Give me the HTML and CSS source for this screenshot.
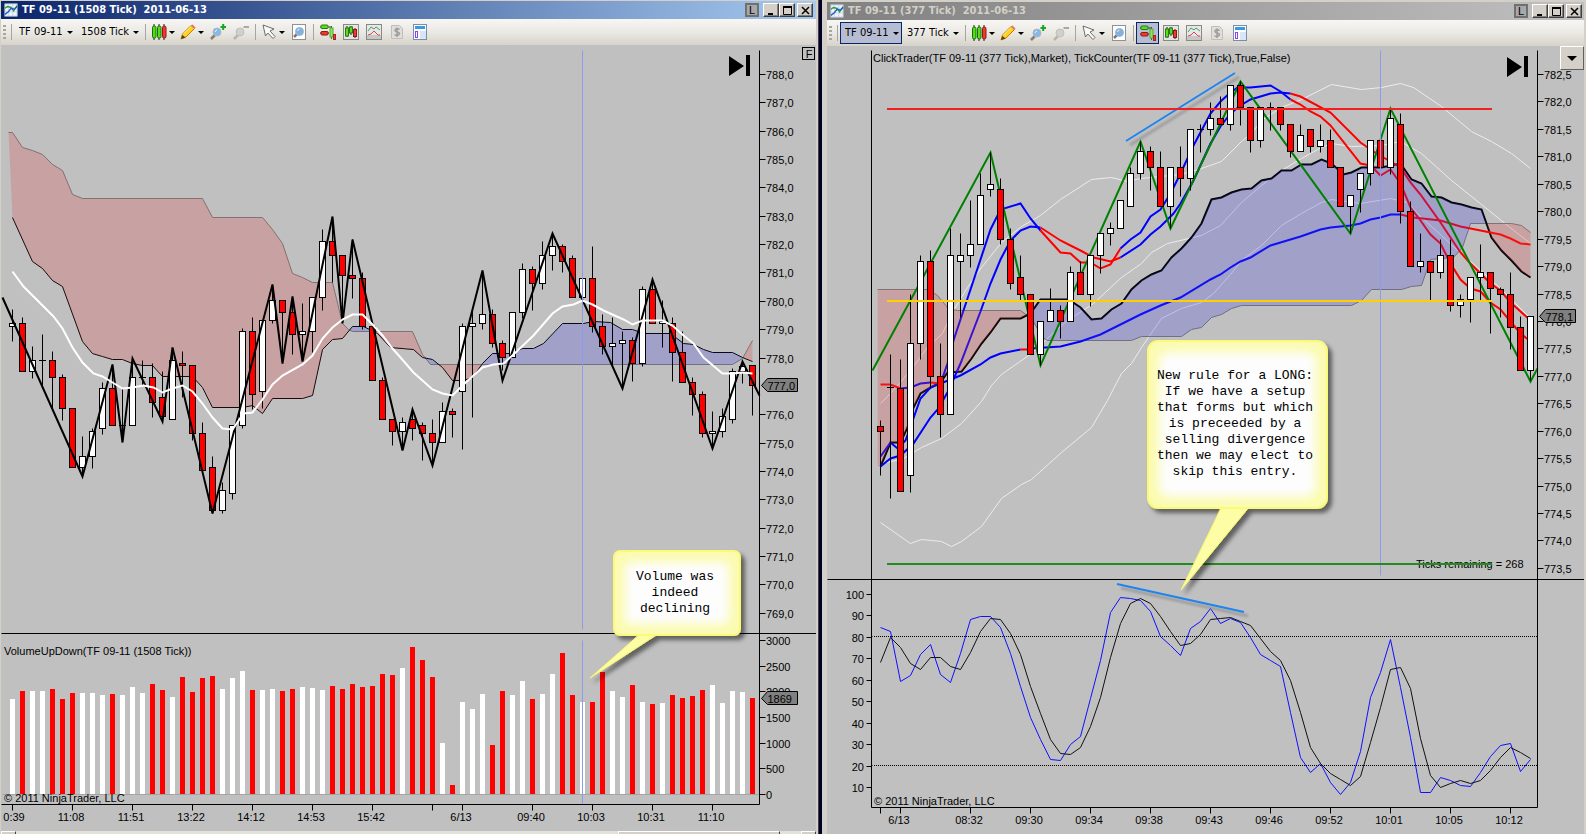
FILE: index.html
```html
<!DOCTYPE html>
<html lang="en">
<head>
<meta charset="utf-8">
<title>TF 09-11 Charts</title>
<link rel="stylesheet" href="styles.css">
</head>
<body>
<svg class="sprites" aria-hidden="true">
  <symbol id="i-app" viewBox="0 0 16 16"><rect x="1" y="1" width="14" height="14" fill="#eef4fb" stroke="#b8c8dc"/><path d="M5 1v14M10 1v14M1 5h14M1 10h14" stroke="#c4d4e8"/><path d="M1 6l3 -2 4 1 3 4 4-6" fill="none" stroke="#2a9a2a" stroke-width="1.500"/><path d="M1 13l4-3 3-4 4 1 3-3" fill="none" stroke="#2458c8" stroke-width="1.500"/></symbol>
  <symbol id="i-candles" viewBox="0 0 16 16"><path d="M3 0v16M8 0v16M13 0v16" stroke="#222"/><rect x="1.500" y="2" width="3.500" height="12" rx="1.500" fill="#4fe010" stroke="#1c6a10"/><rect x="6.500" y="2" width="3.500" height="12" rx="1.500" fill="#4fe010" stroke="#1c6a10"/><rect x="11.500" y="2" width="3.500" height="12" rx="1.500" fill="#f03a30" stroke="#8a1a14"/></symbol>
  <symbol id="i-pencil" viewBox="0 0 16 16"><path d="M1 15l1.500-5L11 1.500l3.500 3L6 13z" fill="#ffd21e" stroke="#c07a10"/><path d="M3 10.500l8-8" stroke="#fff08a"/><path d="M1 15l1.500-4 3 2.500z" fill="#5a3a1a"/><path d="M11 1.500l1.500-1 3 3-1 1.200z" fill="#e87070"/></symbol>
  <symbol id="i-zoomin" viewBox="0 0 16 16"><path d="M1 15l4-4" stroke="#8a7a70" stroke-width="2.500"/><circle cx="7" cy="8" r="4" fill="#86b9e6" stroke="#a9b8c8"/><path d="M5 8a2.500 2.500 0 012-2" stroke="#e8f4ff" fill="none"/><path d="M10.500 3h5.500M13.200 0v6" stroke="#14a81e" stroke-width="2"/></symbol>
  <symbol id="i-zoomout" viewBox="0 0 16 16"><path d="M1 15l4-4" stroke="#b8b5b0" stroke-width="2.500"/><circle cx="7" cy="8" r="4" fill="#d0d0d0" stroke="#c2c0bc"/><path d="M10.500 3h5.500" stroke="#a8a8a8" stroke-width="2"/></symbol>
  <symbol id="i-cursor" viewBox="0 0 16 16"><path d="M2 1l11 4-4 2 5 5.500-2 2L6.800 9 4.500 12z" fill="#fafafa" stroke="#6c6c6c"/></symbol>
  <symbol id="i-find" viewBox="0 0 16 16"><rect x="1.500" y=".5" width="13" height="15" fill="#fff" stroke="#8e9298"/><path d="M3 13l3-3" stroke="#84746c" stroke-width="2.500"/><circle cx="8.500" cy="7.500" r="4" fill="#7fb2e2" stroke="#a0b4c8"/><path d="M6.500 7a2.500 2.500 0 012-2" stroke="#e8f4ff" fill="none"/></symbol>
  <symbol id="i-trader" viewBox="0 0 16 16"><path d="M0 3h11M0 9h9" stroke="#333"/><rect x="1" y="1" width="7" height="3.500" rx="1" fill="#58e020" stroke="#2a7a14"/><rect x="1" y="7.500" width="7" height="3.500" rx="1" fill="#f03a30" stroke="#8a1a14"/><path d="M11.500 2v13" stroke="#2a7a14"/><rect x="10" y="4" width="3" height="9" fill="#8ae858" stroke="#5aa838"/><rect x="13.500" y="10.500" width="2" height="5" fill="#f03a30" stroke="#a02820"/></symbol>
  <symbol id="i-bars" viewBox="0 0 16 16"><rect x=".5" y=".5" width="15" height="15" fill="#e4e4e2" stroke="#888"/><path d="M4 2v11M8 2v9M12 4v10" stroke="#222"/><rect x="2.500" y="4" width="3" height="8" fill="#58e020" stroke="#2a7a14"/><rect x="6.500" y="3" width="3" height="6" fill="#58e020" stroke="#2a7a14"/><rect x="10.500" y="5.500" width="3" height="7" fill="#f03a30" stroke="#8a1a14"/></symbol>
  <symbol id="i-lines" viewBox="0 0 16 16"><rect x=".5" y=".5" width="15" height="15" fill="#e6e8e8" stroke="#888"/><path d="M1 11h14v4H1z" fill="#c6c8c8"/><path d="M2 7l3-4 3 2 2-2 4 3" fill="none" stroke="#46a070"/><path d="M2 11l3-1 3-3 4 4h2" fill="none" stroke="#e04848"/></symbol>
  <symbol id="i-dollar" viewBox="0 0 16 16"><path d="M2.500 1.500h8l3 3v10h-11z" fill="#e0dedb" stroke="#c0bebb"/><path d="M10.500 5.500C9.500 4.500 6 4.400 6 6.400s4.500 1.200 4.500 3.200S6.500 12 5.500 10.600M8 3.500v9.500" fill="none" stroke="#9c9c9c" stroke-width="1.500"/></symbol>
  <symbol id="i-layout" viewBox="0 0 16 16"><rect x="1.500" y=".5" width="13" height="15" fill="#fbfcff" stroke="#7a8ea8"/><path d="M3 3.500h10" stroke="#3a9ade" stroke-width="3"/><rect x="3.500" y="7.500" width="2" height="6" fill="#fff" stroke="#9040f0"/><path d="M8 7h6v8H8z" fill="#d8e4f8"/></symbol>
</svg>
<main class="desk">
  <section class="win win-left" aria-label="1508 Tick chart">
    <header class="title title-active">
      <svg class="ico"><use href="#i-app"/></svg>
      <h1 class="caption">TF 09-11 (1508 Tick)&nbsp; 2011-06-13</h1>
      <button class="sys sys-link" aria-label="Link">L</button>
      <div class="sysgroup">
        <button class="sys" aria-label="Minimize"><svg viewBox="0 0 9 9"><path d="M1 8h5" stroke="#000" stroke-width="2"/></svg></button>
        <button class="sys" aria-label="Maximize"><svg viewBox="0 0 9 9"><path d="M.5 1v7.500h8V1" fill="none" stroke="#000"/><path d="M0 1h9" stroke="#000" stroke-width="2"/></svg></button>
      </div>
      <button class="sys" aria-label="Close"><svg viewBox="0 0 9 9"><path d="M1 1l7 7M8 1L1 8" stroke="#000" stroke-width="1.500"/></svg></button>
    </header>
    <div class="bar" role="toolbar" aria-label="Chart tools">
      <i class="grip"></i><i class="sep"></i>
      <label class="combo"><select aria-label="Instrument"><option>TF 09-11</option></select></label>
      <label class="combo"><select aria-label="Interval"><option>1508 Tick</option></select></label>
      <i class="sep"></i>
      <button class="tool drop" aria-label="Chart style"><svg class="ico"><use href="#i-candles"/></svg></button>
      <button class="tool drop" aria-label="Drawing tools"><svg class="ico"><use href="#i-pencil"/></svg></button>
      <button class="tool" aria-label="Zoom in"><svg class="ico"><use href="#i-zoomin"/></svg></button>
      <button class="tool" aria-label="Zoom out"><svg class="ico"><use href="#i-zoomout"/></svg></button>
      <i class="sep"></i>
      <button class="tool drop" aria-label="Cursor"><svg class="ico"><use href="#i-cursor"/></svg></button>
      <button class="tool" aria-label="Data box"><svg class="ico"><use href="#i-find"/></svg></button>
      <i class="sep"></i>
      <button class="tool" aria-label="Chart trader"><svg class="ico"><use href="#i-trader"/></svg></button>
      <button class="tool" aria-label="Data series"><svg class="ico"><use href="#i-bars"/></svg></button>
      <button class="tool" aria-label="Indicators"><svg class="ico"><use href="#i-lines"/></svg></button>
      <button class="tool" aria-label="Strategies"><svg class="ico"><use href="#i-dollar"/></svg></button>
      <button class="tool" aria-label="Properties"><svg class="ico"><use href="#i-layout"/></svg></button>
    </div>
    <svg id="chart-1508" class="chart" viewBox="1 45 815 786" role="img" aria-label="TF 09-11 1508 Tick price and volume"></svg>
    <div class="scroll"><i class="scroll-btn"></i><i class="scroll-gap"></i><i class="scroll-thumb"></i><i class="scroll-rest"></i><i class="scroll-btn"></i></div>
  </section>
  <div class="divider"></div>
  <section class="win win-right" aria-label="377 Tick chart">
    <header class="title title-idle">
      <svg class="ico"><use href="#i-app"/></svg>
      <h2 class="caption">TF 09-11 (377 Tick)&nbsp; 2011-06-13</h2>
      <button class="sys sys-link" aria-label="Link">L</button>
      <div class="sysgroup">
        <button class="sys" aria-label="Minimize"><svg viewBox="0 0 9 9"><path d="M1 8h5" stroke="#000" stroke-width="2"/></svg></button>
        <button class="sys" aria-label="Maximize"><svg viewBox="0 0 9 9"><path d="M.5 1v7.500h8V1" fill="none" stroke="#000"/><path d="M0 1h9" stroke="#000" stroke-width="2"/></svg></button>
      </div>
      <button class="sys" aria-label="Close"><svg viewBox="0 0 9 9"><path d="M1 1l7 7M8 1L1 8" stroke="#000" stroke-width="1.500"/></svg></button>
    </header>
    <div class="bar" role="toolbar" aria-label="Chart tools">
      <i class="grip"></i><i class="sep"></i>
      <label class="combo combo-on"><select aria-label="Instrument"><option>TF 09-11</option></select></label>
      <label class="combo"><select aria-label="Interval"><option>377 Tick</option></select></label>
      <i class="sep"></i>
      <button class="tool drop" aria-label="Chart style"><svg class="ico"><use href="#i-candles"/></svg></button>
      <button class="tool drop" aria-label="Drawing tools"><svg class="ico"><use href="#i-pencil"/></svg></button>
      <button class="tool" aria-label="Zoom in"><svg class="ico"><use href="#i-zoomin"/></svg></button>
      <button class="tool" aria-label="Zoom out"><svg class="ico"><use href="#i-zoomout"/></svg></button>
      <i class="sep"></i>
      <button class="tool drop" aria-label="Cursor"><svg class="ico"><use href="#i-cursor"/></svg></button>
      <button class="tool" aria-label="Data box"><svg class="ico"><use href="#i-find"/></svg></button>
      <i class="sep"></i>
      <button class="tool tool-on" aria-label="Chart trader"><svg class="ico"><use href="#i-trader"/></svg></button>
      <button class="tool" aria-label="Data series"><svg class="ico"><use href="#i-bars"/></svg></button>
      <button class="tool" aria-label="Indicators"><svg class="ico"><use href="#i-lines"/></svg></button>
      <button class="tool" aria-label="Strategies"><svg class="ico"><use href="#i-dollar"/></svg></button>
      <button class="tool" aria-label="Properties"><svg class="ico"><use href="#i-layout"/></svg></button>
    </div>
    <div class="plot">
      <svg id="chart-377" class="chart" viewBox="827 46 757 788" role="img" aria-label="TF 09-11 377 Tick price and stochastics"></svg>
      <button class="menu-btn" aria-label="Chart menu"></button>
    </div>
  </section>
</main>
<script src="charts.js"></script>
</body>
</html>
```

FILE: styles.css
```css
* { box-sizing: border-box; }
body { margin: 0; background: #c0c0c0; font: 11px/14px "DejaVu Sans Condensed", "Noto Sans", sans-serif; color: #000; }
button, select { font: inherit; color: inherit; margin: 0; padding: 0; border: 0; background: none; border-radius: 0; }
.sprites { display: none; }
.desk { display: grid; grid-template-columns: 818fr 4px 764fr; }
.win { display: flex; flex-direction: column; background: #c0c0c0; min-width: 0; }
.win-left { border: solid #d4d0c8; border-width: 1px 2px 0 1px; }
.win-right { border: solid #d4d0c8; border-width: 2px 2px 0 5px; }
.divider { background: #00002a; border-left: 1px solid #404040; }

.title { display: flex; align-items: center; height: 18px; padding: 0 3px; }
.title-active { background: linear-gradient(90deg, #0a246a, #a6caf0); color: #fff; }
.title-idle { background: linear-gradient(90deg, #808080, #c0c0c0); color: #d4d0c8; padding-right: 2px; }
.ico { width: 16px; height: 16px; display: block; flex: none; }
.title .ico { width: 14px; height: 14px; }
.caption { margin: 0 auto 0 4px; font-size: 11px; font-weight: bold; white-space: nowrap; }
.sysgroup { display: flex; margin: 0 2px 0 4px; }
.sys { width: 16px; height: 14px; background: #d4d0c8; color: #000; border: 1px solid; border-color: #fff #404040 #404040 #fff; box-shadow: inset -1px -1px #808080; display: flex; align-items: center; justify-content: center; }
.sys svg { width: 9px; height: 9px; display: block; }
.sys-link { width: 14px; background: #a8a8a8; border: 2px solid #707070; box-shadow: none; font: 11px/11px "Liberation Sans", sans-serif; }

.bar { display: flex; align-items: center; height: 26px; padding-left: 2px; background: linear-gradient(#f7f6f3, #ebe9e4 50%, #d6d3ca); }
.grip { width: 3px; height: 15px; margin-right: 2px; background: repeating-linear-gradient(#a8a59c 0 2px, transparent 2px 4px); }
.sep { width: 1px; height: 16px; margin: 0 2px 0 3px; background: #a8a59c; }
.combo { display: grid; align-items: center; height: 22px; border: 1px solid transparent; }
.combo select { grid-area: 1 / 1; appearance: none; padding: 0 12px 0 4px; height: 20px; outline: 0; }
.combo::after, .drop::after { content: ""; border: solid transparent; border-width: 3px 3px 0; border-top-color: #000; pointer-events: none; }
.combo::after { grid-area: 1 / 1; justify-self: end; margin-right: 2px; }
.combo-on, .tool-on { background: #b6bdd2; border-color: #0a246a; }
.tool { display: flex; align-items: center; justify-content: center; width: 23px; height: 22px; }
.tool-on { border: 1px solid #0a246a; }
.drop { width: 29px; gap: 2px; }

.plot { position: relative; }
.chart { display: block; width: 100%; height: auto; font: 11px "Liberation Sans", Arial, sans-serif; }
.menu-btn { position: absolute; top: 0; right: 0; width: 24px; height: 24px; display: grid; place-items: center; background: #d4d0c8; border: 1px solid; border-color: #fff #606060 #606060 #fff; }
.menu-btn::after { content: ""; border: solid transparent; border-width: 5px 5px 0; border-top-color: #000; }
.note { font: 13px "Liberation Mono", "Courier New", monospace; }

.scroll { display: flex; height: 3px; background: #e4e1db; }
.scroll i { height: 3px; }
.scroll-btn { flex: 0 0 15px; background: #d4d0c8; border: 1px solid; border-color: #fff #404040 #fff #fff; border-bottom: 0; }
.scroll-gap { flex: 604 1 0; }
.scroll-thumb { flex: 160 1 0; background: #d4d0c8; border: solid; border-width: 1px 1px 0; border-color: #fff #404040 #fff #fff; }
.scroll-rest { flex: 21 1 0; }
```

FILE: charts.js
```js
const NS = 'http://www.w3.org/2000/svg';

function el(parent, name, attrs, text) {
  const e = document.createElementNS(NS, name);
  for (const k in attrs) e.setAttribute(k, attrs[k]);
  if (text !== undefined) e.textContent = text;
  parent.appendChild(e);
  return e;
}
const parse = s => s.trim().split(/\s+/).map(p => p.split(',').map(Number));
const line = (g, pts, stroke, width = 1, extra = {}) =>
  el(g, 'polyline', { points: pts, fill: 'none', stroke, 'stroke-width': width, ...extra });
const rule = (g, x1, y1, x2, y2, stroke = '#000', width = 1, extra = {}) =>
  el(g, 'line', { x1, y1, x2, y2, stroke, 'stroke-width': width, ...extra });
const label = (g, x, y, text, anchor = 'start') =>
  el(g, 'text', { x, y, 'text-anchor': anchor }, text);

function yAt(pts, x) {
  if (x <= pts[0][0]) return pts[0][1];
  for (let i = 1; i < pts.length; i++) {
    if (x <= pts[i][0]) {
      const [x0, y0] = pts[i - 1], [x1, y1] = pts[i];
      return y0 + (y1 - y0) * (x - x0) / (x1 - x0 || 1);
    }
  }
  return pts[pts.length - 1][1];
}

// Fills the area between two spans: blue where the first is on top, red otherwise.
function cloud(g, a, b, from, to) {
  let run = [], side = null;
  const flush = () => {
    if (run.length > 1) {
      const top = run.map(r => r[0] + ',' + r[1]);
      const bottom = run.slice().reverse().map(r => r[0] + ',' + r[2]);
      el(g, 'polygon', { points: top.concat(bottom).join(' '), 'fill-opacity': 0.25, fill: side ? 'rgb(64,64,224)' : 'rgb(224,72,72)' });
    }
  };
  for (let x = from; x <= to; x++) {
    const ya = yAt(a, x), yb = yAt(b, x), s = ya < yb;
    if (side !== null && s !== side) { run.push([x, ya, yb]); flush(); run = []; }
    side = s;
    run.push([x, ya, yb]);
  }
  flush();
}

function candles(g, data, x0) {
  data.trim().split(/\s+/).forEach((d, i) => {
    const kind = d[0], [h, t, b, l] = d.slice(1).split(',').map(Number), x = x0 + i * 10;
    rule(g, x, h, x, l);
    if (kind === 'd') rule(g, x - 3.5, t, x + 3.5, t);
    else el(g, 'rect', { x: x - 3, y: t, width: 6, height: b - t, fill: kind === 'r' ? '#f00' : '#fff', stroke: '#000' });
  });
}

function tag(g, x, y, text) {
  el(g, 'path', { d: `M${x} ${y}l6 -7h30v13h-30z`, fill: '#808080', stroke: '#000' });
  label(g, x + 6, y + 4, text);
}

function defs(svg, id) {
  const d = el(svg, 'defs', {});
  const f = el(d, 'filter', { id: id + '-shadow', x: '-20%', y: '-20%', width: '150%', height: '160%' });
  el(f, 'feDropShadow', { dx: 4, dy: 4, stdDeviation: 2, 'flood-color': '#000', 'flood-opacity': 0.5 });
  const s = el(d, 'filter', { id: id + '-blur', x: '-20%', y: '-20%', width: '140%', height: '140%' });
  el(s, 'feGaussianBlur', { stdDeviation: 5 });
  const t = el(d, 'filter', { id: id + '-soft', x: '-10%', y: '-30%', width: '120%', height: '160%' });
  el(t, 'feGaussianBlur', { stdDeviation: 1 });
}

function callout(svg, id, box, tail, lines, cx, baseline) {
  const g = el(svg, 'g', { filter: `url(#${id}-shadow)` });
  const [x, y, w, h, r] = box;
  el(g, 'path', { d: tail, fill: '#fdfda6', stroke: '#f7f76c', 'stroke-linejoin': 'round' });
  el(g, 'rect', { x, y, width: w, height: h, rx: r, fill: '#fbfbb0', stroke: '#fafa7a', 'stroke-width': 2 });
  el(svg, 'rect', { x: x + 11, y: y + 11, width: w - 22, height: h - 22, rx: r, fill: '#fdfdfd', filter: `url(#${id}-blur)` });
  lines.forEach((t, i) => el(svg, 'text', { class: 'note', x: cx, y: baseline + i * 16, 'text-anchor': 'middle' }, t));
}

function playIcon(g, x, y) {
  el(g, 'path', { d: `M${x} ${y}l15 10-15 10zM${x + 17} ${y - 1}h4v21h-4z`, fill: '#000' });
}

function trend(svg, id, x1, y1, x2, y2) {
  rule(svg, x1 + 4, y1 + 4, x2 + 4, y2 + 4, '#888', 3, { opacity: 0.6, filter: `url(#${id}-soft)` });
  rule(svg, x1, y1, x2, y2, '#1e84f0', 2);
}

(function tick1508() {
  const svg = document.getElementById('chart-1508');
  defs(svg, 'a');
  const g = el(svg, 'g', { transform: 'translate(.5 .5)' });
  const spanA = '12,217 32,261 42,268 52,280 62,286 82,341 92,353 102,356 112,359 122,359 132,363 142,365 152,365 162,376 192,376 202,387 212,407 242,407 252,405 262,413 272,398 302,398 312,395 322,349 332,339 342,338 352,326 363,326 377,333 390,347 413,349 422,357 432,359 442,367 452,380 463,380 472,377 482,363 492,353 510,353 522,348 533,348 543,343 562,323 583,323 593,321 610,322 622,329 632,329 643,333 670,333 683,343 693,344 703,349 712,352 732,352 742,357 752,361';
  const spanB = '8,132 12,132 22,147 32,150 42,154 52,164 62,170 72,194 82,198 202,198 212,217 262,217 272,229 282,243 292,273 302,277 312,282 332,282 342,323 348,329 352,331 412,331 422,354 430,364 732,364 742,358 752,340';
  line(g, spanB, '#777');
  line(g, spanA, '#000');
  cloud(g, parse('8,132 ' + spanA), parse(spanB), 8, 752);

  candles(g, `w309,323,326,341 r317,323,371,371 w346,360,371,378 d334,360,360,388 r351,360,377,410 r374,377,408,420 r408,408,467,467
    w436,456,467,475 w428,431,456,468 w382,388,428,434 r365,388,425,425 d388,425,425,440 w358,377,425,425 d360,377,377,385
    r363,377,402,417 r371,397,416,420 w348,360,419,419 r351,363,365,397 r365,365,433,440 r422,433,470,470 r456,467,510,513
    w482,490,510,513 w425,425,493,499 w328,331,425,428 r317,331,394,409 w320,320,391,408 w285,300,320,323 r300,300,312,362
    r297,312,334,354 w303,331,334,360 w297,297,331,352 w229,241,297,310 r217,241,255,282 r255,255,275,322 r239,275,278,298
    r272,278,326,329 r326,326,380,380 r377,380,419,419 r419,419,431,445 w417,422,431,449 r409,419,428,440 r422,425,433,460
    r419,433,442,465 w402,411,442,442 r408,411,414,437 w323,326,391,449 w310,323,326,417 w270,314,323,329 r309,314,343,347
    r340,343,357,370 w312,312,357,357 w263,269,312,318 r266,269,283,310 w241,255,283,289 w233,246,255,270 r244,246,261,272
    r255,258,297,297 w258,278,297,312 r246,278,326,332 r314,326,346,354 w317,343,346,365 w331,340,343,387 r337,340,363,381
    w286,289,363,366 r279,289,323,323 w300,321,323,347 r317,323,352,381 r331,352,382,382 r377,382,394,415 r391,394,433,437
    w411,431,433,448 w408,416,431,437 w368,371,419,423 w362,366,371,383 r365,365,385,415`, 12);

  line(g, '2,297 82,476 112,364 122,442 132,358 162,421 172,347 212,513 272,284 282,363 292,296 302,361 332,216 342,323 352,239 402,450 412,409 432,465 482,270 502,380 552,233 622,388 652,279 712,448 742,361 759,395', '#000', 2);
  line(g, '12,271 23,286 53,316 62,328 72,347 82,362 93,373 102,376 112,382 122,388 132,387 143,385 153,387 162,392 172,388 182,385 192,391 202,403 212,417 222,428 232,429 243,413 252,412 262,399 272,384 282,375 302,364 312,355 322,338 332,327 342,319 352,314 362,314 372,324 382,335 392,348 400,357 413,372 432,389 442,393 452,395 463,384 482,367 493,364 503,363 513,354 533,335 552,313 562,306 573,304 582,300 592,304 603,310 623,319 632,324 642,320 662,320 672,325 683,335 693,343 703,357 722,373 732,373 742,372 752,373', '#fff', 2);

  const tops = 'w699 r691 w691 w691 r689 r699 r693 w693 w693 w695 r694 w695 w687 w693 r684 r690 w697 r677 r692 r678 r676 w689 w678 w671 r690 w690 w689 r691 r689 w687 w688 w690 r686 r689 r684 r687 r686 r674 r675 w668 r647 r660 r677 w743 r785 w702 w709 w694 r745 r691 w695 w681 r699 w694 w674 r653 r695 w702 r702 r672 w691 w697 r685 w702 r704 w703 r695 r698 r696 r690 w685 w703 w691 w692 r698';
  rule(g, 2, 794, 759, 794, '#a4a4a4');
  tops.split(' ').forEach((t, i) => {
    const y = +t.slice(1);
    el(svg, 'rect', { x: 10 + i * 10, y, width: 5, height: 794 - y, fill: t[0] === 'r' ? '#f00' : '#fff' });
  });

  const over = el(svg, 'g', { transform: 'translate(.5 .5)' });
  rule(over, 582, 50, 582, 629, '#8c9cea');
  rule(over, 582, 640, 582, 803, '#8c9cea');
  rule(over, 1, 633, 816, 633);
  line(over, '759,50 759,804 1,804', '#000');
  for (let i = 0; i < 20; i++) {
    const y = Math.round(74 + i * 28.35);
    if (i === 11) continue;
    rule(over, 759, y, 765, y);
    label(svg, 766, y + 5, (788 - i) + ',0');
  }
  for (let i = 0; i < 7; i++) {
    const y = Math.round(794 - i * 25.7);
    rule(over, 759, y, 765, y);
    label(svg, 766, y + 5, String(i * 500));
  }
  tag(svg, 761.5, 385.5, '777,0');
  tag(svg, 761.5, 698.5, '1869');
  [['0:39', 12], ['11:08', 72], ['11:51', 132], ['13:22', 192], ['14:12', 252], ['14:53', 312], ['15:42', 372], ['', 432], ['6/13', 462], ['09:40', 532], ['10:03', 592], ['10:31', 652], ['11:10', 712]].forEach(([t, x]) => {
    rule(over, x, 804, x, 810);
    label(svg, x === 12 ? 14 : x - 1, 821, t, 'middle');
  });
  label(svg, 4, 655, 'VolumeUpDown(TF 09-11 (1508 Tick))');
  label(svg, 4, 802, '© 2011 NinjaTrader, LLC');
  playIcon(svg, 729, 56);
  el(over, 'rect', { x: 802, y: 47, width: 12, height: 12, fill: 'none', stroke: '#000' });
  label(svg, 809, 58, 'F', 'middle');
  callout(svg, 'a', [614, 551, 126, 84, 6], 'M640 634L590 678L658 634z', ['Volume was', 'indeed', 'declining'], 675, 580);
})();

(function tick377() {
  const svg = document.getElementById('chart-377');
  defs(svg, 'b');
  const g = el(svg, 'g', { transform: 'translate(.5 .5)' });
  const spanA = '880,466 890,442 900,442 907,427 913,407 920,393 930,387 940,382 947,372 961,371 971,358 981,343 990,332 1000,318 1020,318 1030,313 1040,299 1068,299 1080,307 1091,319 1101,318 1111,309 1121,303 1131,289 1141,280 1151,274 1161,270 1171,257 1181,248 1191,237 1201,223 1211,199 1221,197 1231,192 1241,189 1251,188 1261,180 1271,178 1281,170 1291,170 1301,164 1311,164 1321,159 1331,163 1343,174 1351,172 1361,167 1381,167 1400,163 1411,179 1421,183 1431,196 1441,197 1451,202 1461,204 1471,207 1481,209 1486,223 1491,237 1501,250 1511,260 1521,271 1530,277';
  const spanB = '877,289 928,289 937,295 948,308 957,310 1020,310 1031,318 1042,337 1047,340 1131,340 1141,336 1181,336 1191,329 1201,327 1211,317 1221,314 1231,308 1241,305 1351,305 1361,300 1371,289 1401,289 1411,286 1421,285 1430,259 1453,257 1462,247 1470,223 1511,223 1521,225 1530,232';
  [
    '880,403 891,392 910,370 927,347 942,333 953,310 967,287 981,267 1001,242 1021,226 1040,215 1060,199 1091,179 1111,177 1127,181 1140,178 1180,174 1201,168 1221,161 1241,141 1251,133 1261,120 1281,107 1301,99 1331,84 1361,89 1381,87 1400,83 1413,87 1441,106 1471,131 1491,141 1511,153 1530,168',
    '880,463 891,461 903,458 921,447 941,438 961,423 981,401 991,385 1001,374 1031,353 1050,335 1067,320 1093,303 1121,277 1141,263 1151,252 1167,243 1201,235 1220,225 1241,202 1261,185 1281,170 1301,158 1321,147 1331,143 1351,146 1381,145 1400,141 1421,153 1451,180 1481,204 1507,225 1530,243',
    '880,522 910,543 921,539 941,541 951,546 961,541 981,526 1001,498 1021,484 1031,479 1061,452 1091,427 1107,400 1121,373 1131,363 1141,347 1161,318 1181,308 1201,302 1213,293 1230,274 1241,260 1261,245 1281,225 1301,213 1321,202 1331,199 1360,203 1390,198 1407,202 1421,217 1441,235 1457,250 1477,267 1500,288 1530,318'
  ].forEach(p => line(g, p, '#ececf0'));
  line(g, spanB, '#777');
  line(g, spanA, '#000', 2);

  // Moving averages: blue while rising, red while falling.
  const B = '#00f', R = '#f00';
  [
    [R, '880,384 890,384 900,388'],
    [B, '900,388 910,387 920,383 930,382'],
    [R, '930,382 940,383'],
    [B, '940,383 960,375 980,364 990,357 1000,353 1020,349'],
    [R, '1020,349 1030,349'],
    [B, '1030,348 1060,346 1080,341 1100,334 1120,324 1140,314 1160,305 1180,297 1210,279 1220,274 1230,267 1240,261 1250,257 1270,245 1280,242 1300,236 1320,229 1330,227 1350,225 1360,223 1370,219 1380,217 1390,214 1400,214'],
    [R, '1400,214 1413,217 1440,220 1460,226 1480,230 1500,234 1510,238 1520,243 1530,244'],
    [B, '880,456 890,442 897,448 905,440 920,398 930,387 940,383 947,363 953,340 990,229 1000,209 1020,203 1030,218 1040,230'],
    [R, '1040,230 1060,252 1070,253 1080,262 1090,262 1100,268 1110,264 1120,248'],
    [B, '1120,248 1130,239 1140,232 1150,216 1160,209 1170,193 1180,173 1193,145 1210,113 1220,101 1230,92 1237,87 1250,87 1270,85 1280,91 1290,99'],
    [R, '1290,99 1300,104 1310,111 1320,116 1330,125 1360,163 1370,165 1380,175 1390,169 1400,183 1410,207 1420,220 1430,234 1440,243 1450,263 1460,279 1470,288 1480,291 1490,302 1500,309 1520,333 1530,341'],
    [B, '880,466 890,458 900,455 913,443 930,417 938,408 948,390 960,363 970,337 980,311 990,283 1000,259 1010,240 1020,230 1030,226 1040,227'],
    [R, '1040,227 1060,240 1070,245 1080,250 1093,257 1110,261 1120,257'],
    [B, '1120,257 1140,244 1150,234 1160,226 1173,213 1180,203 1193,180 1210,143 1220,126 1230,113 1240,105 1250,99 1270,93 1280,92 1290,93'],
    [R, '1290,93 1300,96 1330,112 1360,142 1376,153 1390,161 1400,167 1410,182 1420,194 1430,208 1440,222 1450,237 1460,252 1470,263 1490,283 1500,290 1510,302 1530,320']
  ].forEach(([c, p]) => line(g, p, c, 2));
  cloud(g, parse('877,465 ' + spanA), parse(spanB), 877, 1530);
  line(g, '872,370 990,152 1040,365 1140,141 1170,228 1240,81 1350,233 1390,108 1530,381 1537,368', '#008000', 2);

  trend(svg, 'b', 1126, 141, 1235, 73);
  const front = el(svg, 'g', { transform: 'translate(.5 .5)' });
  candles(front, `r420,426,431,475 d354,387,387,498 r359,388,491,491 w294,343,475,492 w255,261,343,359 r250,261,376,388 r343,376,414,437
    w228,255,414,414 w233,255,261,317 w200,244,255,267 w173,195,244,244 w152,184,189,196 r178,189,239,244 r228,239,283,289
    r255,277,294,300 r294,294,354,354 w321,321,354,365 w288,310,321,321 r305,310,321,338 w266,272,321,321 r261,272,294,294
    w255,255,294,306 w233,233,255,273 w222,228,233,245 w200,200,228,228 w167,173,206,206 w141,151,173,179 r146,151,167,190
    r151,167,206,206 w167,167,206,228 r146,167,178,196 w129,129,178,190 d124,129,129,152 w102,118,129,135 r96,118,124,124
    w85,85,124,130 r81,85,107,125 r107,107,140,152 w107,107,140,147 d102,107,107,130 r107,107,124,130 r124,124,151,157
    w124,135,151,151 r129,129,146,152 w124,140,146,152 r129,140,167,167 r167,167,206,206 w195,195,206,233 w173,173,189,212
    w140,140,173,185 r129,140,167,179 w108,118,167,174 r113,124,211,223 r201,211,266,266 w233,261,266,272 r261,261,272,300
    w239,255,272,278 r239,255,305,311 w294,299,305,317 w277,277,299,322 w244,272,277,300 r272,272,288,333 r287,289,294,317
    r272,294,327,349 r316,327,370,370 w316,316,370,380`, 880);

  label(svg, 1416, 568, 'Ticks remaining = 268');
  rule(svg, 887, 109, 1492, 109, '#f02020', 2);
  rule(svg, 887, 301, 1492, 301, '#ffd000', 2);
  rule(svg, 887, 564, 1492, 564, '#228b22', 2);
  rule(front, 1380, 50, 1380, 575, '#8c9cea');

  const series = v => v.split(',').map((y, i) => `${880 + i * 10},${y}`).join(' ');
  line(front, series('627,631,681,675,654,644,674,682,653,619,616,616,627,653,686,717,739,759,760,744,736,698,660,612,597,598,600,611,636,645,655,628,621,608,623,618,622,637,654,660,666,712,757,772,763,782,794,782,751,697,672,639,687,737,792,792,777,780,785,786,772,756,745,743,771,759'), '#1010ff');
  line(front, series('662,637,647,663,669,657,657,666,669,652,631,618,619,633,654,686,713,739,753,754,747,726,697,657,623,603,598,603,616,631,645,643,634,619,618,617,621,625,638,651,660,680,712,747,763,773,779,785,776,742,707,669,667,688,738,775,787,783,780,783,780,770,757,747,752,758'), '#111');
  rule(front, 872, 636, 1537, 636, '#000', 1, { 'stroke-dasharray': '1 1', 'stroke-dashoffset': 0.5 });
  rule(front, 872, 765, 1537, 765, '#000', 1, { 'stroke-dasharray': '1 1', 'stroke-dashoffset': 0.5 });
  rule(front, 827, 579, 1584, 579);
  line(front, '871,50 871,807 1537,807 1537,50', '#000');
  for (let i = 0; i < 19; i++) {
    const y = Math.round(74 + i * 27.44), p = 782.5 - i * 0.5;
    rule(front, 1537, y, 1543, y);
    label(svg, 1544, y + 5, p.toFixed(1).replace('.', ','));
  }
  tag(svg, 1539.5, 316.5, '778,1');
  for (let i = 0; i < 10; i++) {
    const y = Math.round(594 + i * 21.45);
    rule(front, 866, y, 871, y);
    label(svg, 864, y + 5, String(100 - i * 10), 'end');
  }
  [['', 880], ['6/13', 900], ['08:32', 970], ['09:30', 1030], ['09:34', 1090], ['09:38', 1150], ['09:43', 1210], ['09:46', 1270], ['09:52', 1330], ['10:01', 1390], ['10:05', 1450], ['10:12', 1510]].forEach(([t, x]) => {
    rule(front, x, 807, x, 813);
    label(svg, x - 1, 824, t, 'middle');
  });
  label(svg, 873, 62, 'ClickTrader(TF 09-11 (377 Tick),Market), TickCounter(TF 09-11 (377 Tick),True,False)');
  label(svg, 874, 805, '© 2011 NinjaTrader, LLC');
  playIcon(svg, 1507, 57);
  trend(svg, 'b', 1117, 584, 1244, 612);
  callout(svg, 'b', [1148, 341, 179, 167, 10], 'M1222 506L1181 590L1250 506z',
    ['New rule for a LONG:', 'If we have a setup', 'that forms but which', 'is preceeded by a', 'selling divergence', 'then we may elect to', 'skip this entry.'], 1235, 379);
})();
```
